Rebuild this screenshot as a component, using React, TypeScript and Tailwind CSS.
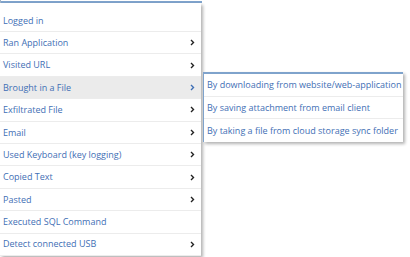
const items = [
  { label: "Logged in", sub: false },
  { label: "Ran Application", sub: true },
  { label: "Visited URL", sub: true },
  { label: "Brought in a File", sub: true, active: true },
  { label: "Exfiltrated File", sub: true },
  { label: "Email", sub: true },
  { label: "Used Keyboard (key logging)", sub: true },
  { label: "Copied Text", sub: true },
  { label: "Pasted", sub: true },
  { label: "Executed SQL Command", sub: false },
  { label: "Detect connected USB", sub: true },
];

const subItems = [
  "By downloading from website/web-application",
  "By saving attachment from email client",
  "By taking a file from cloud storage sync folder",
];

function Chevron({ active }: { active?: boolean }) {
  return (
    <svg width="5" height="7" viewBox="0 0 5 7" className="shrink-0">
      <path
        d="M1 1 L3.5 3.5 L1 6"
        fill="none"
        stroke={active ? "#3f6fb5" : "#222"}
        strokeWidth="1.4"
      />
    </svg>
  );
}

export default function App() {
  return (
    <div className="relative h-[257px] w-[410px] overflow-hidden bg-white font-['Open_Sans',sans-serif] text-[9px] text-[#3f6fb5]">
      {/* input underline */}
      <div className="h-[3px] w-[202px] border-l border-[#9fb3c8] pt-[1px]">
        <div className="h-[2px] bg-[#7fa3cc]" />
      </div>

      <div className="flex items-start">
        {/* main menu */}
        <div className="w-[201px] bg-white shadow-[2px_2px_3px_rgba(0,0,0,0.3)]">
          <div className="h-[29px] border-b border-[#ececec] pl-[3px] pt-[10px] leading-[16px]">
            Logged in
          </div>
          {items.slice(1).map((it) => (
            <div
              key={it.label}
              className={`flex h-[22.4px] items-center justify-between border-b border-[#ececec] pl-[3px] pr-[6px] ${
                it.active ? "bg-[#ebebeb]" : ""
              }`}
            >
              <span>{it.label}</span>
              {it.sub && <Chevron active={it.active} />}
            </div>
          ))}
        </div>

        {/* submenu */}
        <div className="ml-[2px] mt-[69px] w-[200px] border-l border-t-2 border-[#7fa3cc] bg-white shadow-[2px_2px_3px_rgba(0,0,0,0.3)]">
          {subItems.map((s, i) => (
            <div
              key={s}
              className={`flex h-[22.5px] items-center whitespace-nowrap pl-[3px] ${
                i < subItems.length - 1 ? "border-b border-[#ececec]" : ""
              }`}
            >
              {s}
            </div>
          ))}
        </div>
      </div>
    </div>
  );
}
